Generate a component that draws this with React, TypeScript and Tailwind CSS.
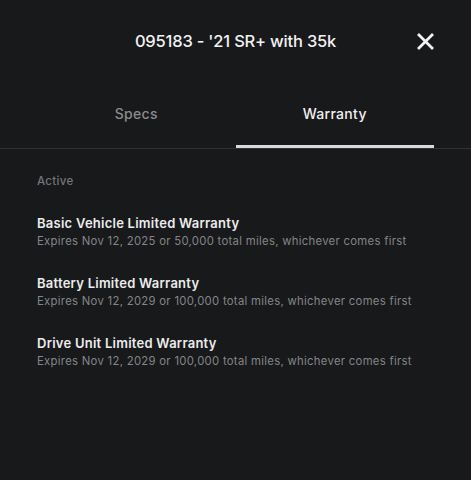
const WARRANTIES = [
  {
    title: "Basic Vehicle Limited Warranty",
    desc: "Expires Nov 12, 2025 or 50,000 total miles, whichever comes first",
  },
  {
    title: "Battery Limited Warranty",
    desc: "Expires Nov 12, 2029 or 100,000 total miles, whichever comes first",
  },
  {
    title: "Drive Unit Limited Warranty",
    desc: "Expires Nov 12, 2029 or 100,000 total miles, whichever comes first",
  },
];

export default function App() {
  return (
    <div
      className="h-[480px] w-[471px] bg-[#18191b] text-white"
      style={{ fontFamily: "Inter, 'Liberation Sans', sans-serif" }}
    >
      <header className="flex h-[82px] items-center justify-center relative">
        <h1 className="text-[16.5px] font-medium tracking-[-0.2px] text-[#f2f2f2]">095183 - '21 SR+ with 35k</h1>
        <button className="absolute right-[37px] top-[33px] text-[#f2f2f2]">
          <svg width="17" height="17" viewBox="0 0 17 17" fill="none" stroke="currentColor" strokeWidth="2.8" strokeLinecap="square">
            <path d="M2 2 15 15M15 2 2 15" />
          </svg>
        </button>
      </header>

      <nav className="border-b border-[#303133] px-[37px]">
        <div className="grid grid-cols-2">
          <div className="flex h-[66px] items-center justify-center pb-[3px] text-[14px] font-medium tracking-[0.3px] text-[#8a8b8d]">
            Specs
          </div>
          <div className="flex h-[66px] items-center justify-center border-b-[3px] border-[#d9d9d9] text-[14px] font-medium tracking-[0.3px] text-[#f0f0f0]">
            Warranty
          </div>
        </div>
      </nav>

      <section className="px-[37px] pt-[24px]">
        <p className="text-[11.5px] font-medium tracking-[0.3px] text-[#747577]">Active</p>
        <ul className="mt-[25px] flex flex-col gap-[25px]">
          {WARRANTIES.map((w) => (
            <li key={w.title}>
              <h3 className="text-[13px] font-semibold leading-[17px] tracking-[0.25px] text-[#ececec]">{w.title}</h3>
              <p className="mt-[1px] text-[11.3px] leading-[17px] tracking-[0.3px] text-[#848587]">{w.desc}</p>
            </li>
          ))}
        </ul>
      </section>
    </div>
  );
}
